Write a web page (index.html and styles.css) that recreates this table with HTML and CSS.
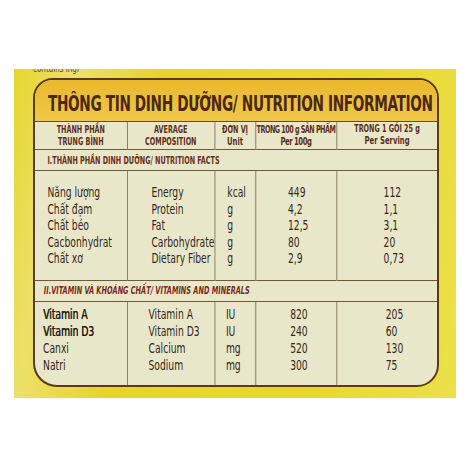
FILE: index.html
```html
<!DOCTYPE html>
<html lang="vi">
<head>
  <meta charset="UTF-8">
  <meta name="viewport" content="width=device-width, initial-scale=1.0">
  <title>Thông tin dinh dưỡng</title>
  <link rel="stylesheet" href="styles.css">
</head>
<body>
  <div class="pack">
    <div class="ingredients"><span>contains ingr</span></div>
    <div class="label">
      <h1 class="title"><span>THÔNG TIN DINH DƯỠNG/ NUTRITION INFORMATION</span></h1>
      <!-- printed face is a condensed font, so the table is drawn wide and squeezed -->
      <table class="facts">
        <colgroup>
          <col class="c1"><col class="c2"><col class="c3"><col class="c4"><col class="c5">
        </colgroup>
        <thead>
          <tr>
            <th>THÀNH PHẦN<br>TRUNG BÌNH</th>
            <th>AVERAGE<br>COMPOSITION</th>
            <th>ĐƠN VỊ<br><span class="sub">Unit</span></th>
            <th class="tight">TRONG 100 g SẢN PHẨM<br><span class="sub">Per 100g</span></th>
            <th class="top">TRONG 1 GÓI 25 g<br><span class="sub">Per Serving</span></th>
          </tr>
        </thead>
        <tbody>
          <tr class="section"><td colspan="5">I.THÀNH PHẦN DINH DƯỠNG/ NUTRITION FACTS</td></tr>
        </tbody>
        <tbody class="block">
          <tr><td>Năng lượng</td><td>Energy</td><td>kcal</td><td>449</td><td>112</td></tr>
          <tr><td>Chất đạm</td><td>Protein</td><td>g</td><td>4,2</td><td>1,1</td></tr>
          <tr><td>Chất béo</td><td>Fat</td><td>g</td><td>12,5</td><td>3,1</td></tr>
          <tr><td>Cacbonhydrat</td><td>Carbohydrate</td><td>g</td><td>80</td><td>20</td></tr>
          <tr><td>Chất xơ</td><td>Dietary Fiber</td><td>g</td><td>2,9</td><td>0,73</td></tr>
        </tbody>
        <tbody>
          <tr class="section minerals"><td colspan="5">II.VITAMIN VÀ KHOÁNG CHẤT/ VITAMINS AND MINERALS</td></tr>
        </tbody>
        <tbody class="block vitamins">
          <tr><td class="strong">Vitamin A</td><td>Vitamin A</td><td>IU</td><td>820</td><td>205</td></tr>
          <tr><td class="strong">Vitamin D3</td><td>Vitamin D3</td><td>IU</td><td>240</td><td>60</td></tr>
          <tr><td>Canxi</td><td>Calcium</td><td>mg</td><td>520</td><td>130</td></tr>
          <tr><td>Natri</td><td>Sodium</td><td>mg</td><td>300</td><td>75</td></tr>
        </tbody>
      </table>
    </div>
  </div>
</body>
</html>
```

FILE: styles.css
```css
body {
  margin: 0;
  background: #fff;
  font-family: "DejaVu Sans Condensed", "DejaVu Sans", sans-serif;
  color: #33271b;
}
.pack {
  width: 406px;
  height: 313px;
  margin: 69px 0 0 14px;
  padding: 0 17px 16px 19px;
  background: linear-gradient(100deg, #e6d62e 0%, #ede06a 12%, #e6d42a 30%, #e8d72c 70%, #ece04a 100%);
}
.ingredients {
  height: 9px;
  overflow: hidden;
  font-size: 10px;
  line-height: 10px;
  color: #5a4a30;
}
.ingredients span {
  display: block;
  width: 100px;
  margin-top: -5px;
  transform: scaleX(0.8);
  transform-origin: left;
}
.label {
  background: #e9e7ca;
  border: 2px solid #5b3a1c;
  border-radius: 20px 20px 22px 24px;
  overflow: hidden;
}
.title {
  margin: 0;
  height: 41px;
  line-height: 48px;
  padding-left: 13px;
  font-size: 22px;
  font-weight: bold;
  color: #4a2716;
  background: linear-gradient(180deg, #eab82c 0%, #efc84a 100%);
  border-bottom: 1px solid #6a4a26;
  white-space: nowrap;
}
.title span {
  display: inline-block;
  letter-spacing: -0.5px;
  transform: scaleX(0.69);
  transform-origin: left;
}
.facts {
  width: 551px;
  border-collapse: collapse;
  table-layout: fixed;
  transform: scaleX(0.73);
  transform-origin: left top;
}
.c1 { width: 126px; }
.c2 { width: 120px; }
.c3 { width: 56px; }
.c4 { width: 111px; }
.facts th {
  height: 26px;
  padding: 0;
  font-size: 9.8px;
  line-height: 11.5px;
  font-weight: bold;
  color: #5e2e1a;
  border-left: 1px solid #6d5a3c;
  vertical-align: middle;
  white-space: nowrap;
}
.facts th .sub {
  font-size: 10.5px;
}
.facts th.tight {
  letter-spacing: -0.7px;
}
.facts th.top {
  vertical-align: top;
  padding-top: 1px;
}
.facts th:first-child,
.facts td:first-child {
  border-left: none;
}
.facts thead tr {
  border-bottom: 1px solid #6d5a3c;
}
.section td {
  height: 20px;
  padding: 0 0 0 17px;
  font-size: 9.8px;
  font-weight: bold;
  color: #6a2e1c;
  border-bottom: 1px solid #6d5a3c;
}
.minerals td {
  font-size: 10px;
  font-style: italic;
  padding-left: 12px;
  color: #7a2a1a;
  border-top: 1px solid #6d5a3c;
}
.block td {
  padding: 0;
  font-size: 14px;
  line-height: 16.5px;
  border-left: 1px solid #6d5a3c;
  white-space: nowrap;
}
.block tr:first-child td { padding-top: 13px; }
.block tr:last-child td { padding-bottom: 13px; }
.block td:nth-child(1) { padding-left: 17px; }
.block td:nth-child(2) { padding-left: 33px; }
.block td:nth-child(3) { padding-left: 17px; }
.block td:nth-child(4) { padding-left: 44px; }
.block td:nth-child(5) { padding-left: 64px; }
.vitamins td { line-height: 17px; }
.vitamins tr:first-child td { padding-top: 4px; }
.vitamins tr:last-child td { padding-bottom: 11px; }
.vitamins td:nth-child(1) { padding-left: 11px; }
.vitamins td:nth-child(2) { padding-left: 29px; }
.vitamins td:nth-child(3) { padding-left: 15px; }
.vitamins td:nth-child(4) { padding-left: 47px; }
.vitamins td:nth-child(5) { padding-left: 67px; }
.vitamins td.strong {
  color: #231a10;
  text-shadow: 0.5px 0 0 #231a10;
}
```
